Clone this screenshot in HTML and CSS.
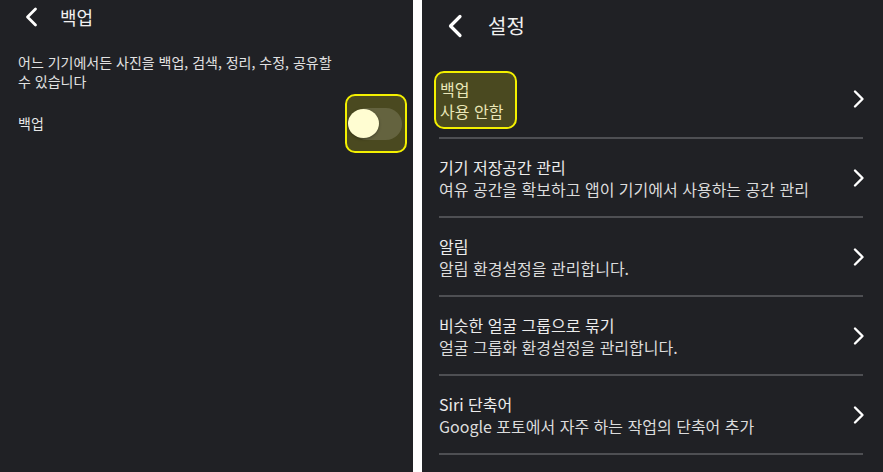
FILE: index.html
```html
<!DOCTYPE html>
<html lang="ko">
<head>
<meta charset="utf-8">
<title>백업 / 설정</title>
<link rel="stylesheet" href="styles.css">
</head>
<body>
<div class="screen">
  <section class="panel left">
    <header class="head-left">
      <svg class="back back-sm" viewBox="0 0 14 20" aria-hidden="true"><path d="M11.5 2 L3.5 10 L11.5 18" /></svg>
      <h1 class="title-sm">백업</h1>
    </header>
    <p class="desc">어느 기기에서든 사진을 백업, 검색, 정리, 수정, 공유할<br>수 있습니다</p>
    <div class="toggle-row">
      <span class="label">백업</span>
      <span class="mark toggle-mark">
        <span class="track"></span>
        <span class="knob"></span>
      </span>
    </div>
  </section>
  <div class="gap"></div>
  <section class="panel right">
    <header class="head-right">
      <svg class="back back-lg" viewBox="0 0 16 24" aria-hidden="true"><path d="M13 2.5 L3.5 12 L13 21.5" /></svg>
      <h1 class="title-lg">설정</h1>
    </header>
    <ul class="list">
      <li class="row">
        <div class="text mark text-mark">
          <div class="t1">백업</div>
          <div class="t2">사용 안함</div>
        </div>
        <svg class="chev" viewBox="0 0 14 20" aria-hidden="true"><path d="M3 2.5 L10.5 10 L3 17.5" /></svg>
      </li>
      <li class="row">
        <div class="text">
          <div class="t1">기기 저장공간 관리</div>
          <div class="t2">여유 공간을 확보하고 앱이 기기에서 사용하는 공간 관리</div>
        </div>
        <svg class="chev" viewBox="0 0 14 20" aria-hidden="true"><path d="M3 2.5 L10.5 10 L3 17.5" /></svg>
      </li>
      <li class="row">
        <div class="text">
          <div class="t1">알림</div>
          <div class="t2">알림 환경설정을 관리합니다.</div>
        </div>
        <svg class="chev" viewBox="0 0 14 20" aria-hidden="true"><path d="M3 2.5 L10.5 10 L3 17.5" /></svg>
      </li>
      <li class="row">
        <div class="text">
          <div class="t1">비슷한 얼굴 그룹으로 묶기</div>
          <div class="t2">얼굴 그룹화 환경설정을 관리합니다.</div>
        </div>
        <svg class="chev" viewBox="0 0 14 20" aria-hidden="true"><path d="M3 2.5 L10.5 10 L3 17.5" /></svg>
      </li>
      <li class="row">
        <div class="text">
          <div class="t1">Siri 단축어</div>
          <div class="t2">Google 포토에서 자주 하는 작업의 단축어 추가</div>
        </div>
        <svg class="chev" viewBox="0 0 14 20" aria-hidden="true"><path d="M3 2.5 L10.5 10 L3 17.5" /></svg>
      </li>
    </ul>
  </section>
</div>
</body>
</html>
```

FILE: styles.css
```css
* { box-sizing: border-box; }
html, body { margin: 0; padding: 0; background: #ffffff; }
body {
  font-family: "Noto Sans CJK KR", "Noto Sans", sans-serif;
  color: #e6e6e6;
}
.screen {
  display: flex;
  width: 883px;
  height: 472px;
  overflow: hidden;
}
.panel {
  background: #202125;
  height: 100%;
}
.left { width: 413px; flex: none; }
.gap { width: 9px; flex: none; background: #ffffff; }
.right { flex: 1; }

.back path, .chev path {
  fill: none;
  stroke: #ffffff;
  stroke-linecap: round;
  stroke-linejoin: round;
}

/* left panel */
.head-left {
  display: flex;
  align-items: center;
  height: 33px;
  padding-left: 24px;
}
.back-sm { width: 14px; height: 20px; flex: none; }
.back-sm path { stroke-width: 2.8; }
.title-sm {
  margin: 0 0 0 22px;
  font-size: 18px;
  font-weight: 400;
  color: #f0f0f0;
  line-height: 1;
}
.desc {
  margin: 20px 0 0 18px;
  font-size: 14px;
  line-height: 19px;
  color: #e2e2e2;
}
.toggle-row {
  display: flex;
  align-items: center;
  justify-content: space-between;
  margin-top: 3px;
  padding: 0 6px 0 18px;
}
.label { font-size: 14px; color: #e6e6e6; margin-top: -1px; }
.mark {
  background: #4a4920;
  border: 2px solid #f3f000;
  border-radius: 10px;
}
.toggle-mark {
  position: relative;
  width: 62px;
  height: 59px;
}
.track {
  position: absolute;
  left: 4px;
  top: 12px;
  width: 51px;
  height: 32px;
  border-radius: 16px;
  background: #64633f;
}
.knob {
  position: absolute;
  left: 1px;
  top: 13px;
  width: 31px;
  height: 29px;
  border-radius: 50%;
  background: #fffdd2;
  box-shadow: 0 1px 3px rgba(0,0,0,0.35);
}

/* right panel */
.head-right {
  display: flex;
  align-items: center;
  height: 52px;
  padding-left: 25px;
}
.back-lg { width: 16px; height: 24px; flex: none; }
.back-lg path { stroke-width: 3.2; }
.title-lg {
  margin: 0 0 0 25px;
  font-size: 20px;
  font-weight: 400;
  color: #f0f0f0;
  line-height: 1;
}
.list {
  list-style: none;
  margin: 8px 0 0 0;
  padding: 0;
}
.row {
  display: flex;
  align-items: center;
  justify-content: space-between;
  height: 79px;
  margin: 0 20px 0 17px;
  border-bottom: 2px solid #4e4f53;
}
.text { line-height: 22px; }
.t1 { font-size: 16px; color: #ececec; }
.t2 { font-size: 16px; color: #dcdcdc; }
.text-mark {
  margin-left: -5px;
  padding: 5px 12px 5px 4px;
  margin-top: 2px;
}
.text-mark .t1, .text-mark .t2 { color: #e9e6b8; }
.chev {
  width: 14px;
  height: 20px;
  flex: none;
  margin-right: -3px;
}
.chev path { stroke-width: 2.4; }
```
